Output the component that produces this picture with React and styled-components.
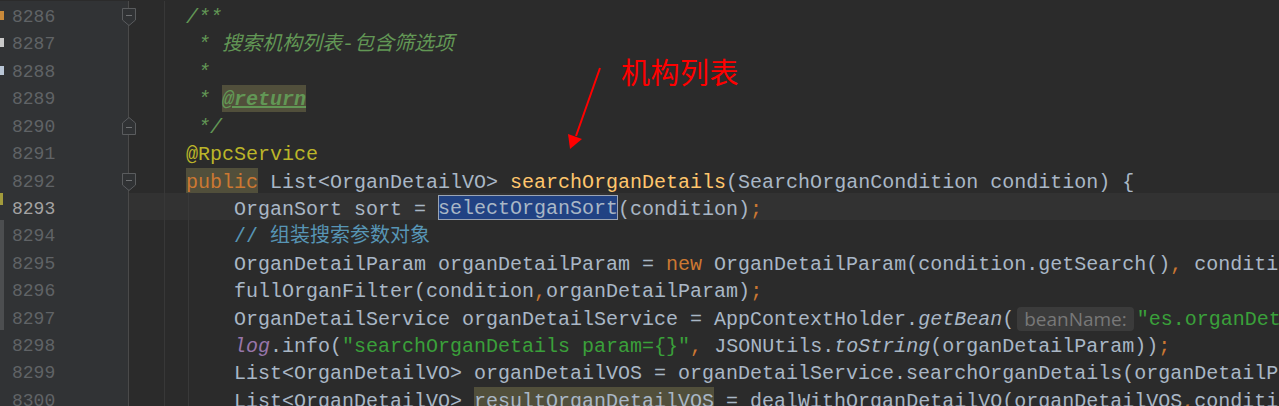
import React from "react";
import styled, { createGlobalStyle, css } from "styled-components";

const Global = createGlobalStyle`
  html, body {
    margin: 0;
    background: #2b2b2b;
    overflow: hidden;
  }
`;

const LINE = 27.43;

const Editor = styled.div`
  position: relative;
  width: 1279px;
  height: 406px;
  overflow: hidden;
  padding-top: 1px;
  box-sizing: border-box;
  background: #2b2b2b;
  font-family: "Liberation Mono", "Noto Sans CJK SC", monospace;
`;

const Row = styled.div`
  display: grid;
  grid-template-columns: 128px 37px 1fr;
  height: ${LINE}px;
  position: relative;
  background: ${({ current }) => (current ? "#323232" : "transparent")};
`;

const Gutter = styled.div`
  position: relative;
  background: #313335;
  color: ${({ current }) => (current ? "#a4a3a3" : "#606366")};
  font-size: 18px;
  line-height: ${LINE}px;
  padding: 3px 0 0 12px;
  box-sizing: border-box;
`;

const FoldCol = styled.div`
  border-left: 1px solid #4a4a4a;
  border-right: 1px solid #383838;
`;

const Code = styled.div`
  position: relative;
  padding: 3px 0 0 21px;
  box-sizing: border-box;
  font-size: 20px;
  line-height: ${LINE}px;
  white-space: pre;
  overflow: hidden;
  color: #a9b7c6;
  ${({ guide }) =>
    guide &&
    css`
      &::before {
        content: "";
        position: absolute;
        left: 23px;
        top: 0;
        bottom: 0;
        border-left: 1px solid #393939;
      }
    `}
`;

const EdgeMark = styled.span`
  position: absolute;
  left: 0;
  top: ${({ top }) => top}px;
  width: ${({ w }) => w}px;
  height: ${({ h }) => h}px;
  background: ${({ color }) => color};
`;

const FoldIcon = styled.svg`
  position: absolute;
  left: 121px;
  top: ${({ dir }) => (dir === "up" ? 6 : 7)}px;
  width: 16px;
  height: 18px;
`;

const colors = {
  t: "#a9b7c6",
  k: "#cc7832",
  a: "#bbb529",
  m: "#ffc66d",
  c: "#629755",
  lc: "#5795b5",
  s: "#3aa03a",
  p: "#cc7832",
  st: "#9876aa",
  it: "#a9b7c6",
};

const Tok = styled.span`
  color: ${({ kind }) => colors[kind] || "#a9b7c6"};
  font-style: ${({ kind }) => (["c", "st", "it"].includes(kind) ? "italic" : "normal")};
`;

const DocTag = styled.span`
  color: #629755;
  font-style: italic;
  font-weight: bold;
  text-decoration: underline;
  background: #514f3b;
  display: inline-block;
  height: 27px;
  line-height: 27px;
  vertical-align: top;
  margin-top: -1px;
  padding-top: 1px;
  box-sizing: border-box;
`;

const Marked = styled.span`
  color: ${({ kind }) => (kind === "kh" ? "#cc7832" : "#a9b7c6")};
  background: #514f3b;
  display: inline-block;
  height: 26px;
  line-height: 26px;
  padding-top: 2px;
  vertical-align: top;
  margin-top: -1px;
`;

const Selection = styled.span`
  background: #214283;
  outline: 1px solid #9aa4b4;
  outline-offset: -1px;
  display: inline-block;
  height: 25px;
  line-height: 25px;
  padding-top: 1px;
  box-sizing: border-box;
  vertical-align: top;
  margin-top: -1px;
`;

const Hint = styled.span`
  display: inline-block;
  vertical-align: top;
  margin: 1px 3px 0 3px;
  height: 24px;
  line-height: 24px;
  padding: 0 7px;
  border-radius: 4px;
  background: #3b3b3b;
  color: #787878;
  font-family: "Open Sans", "Liberation Sans", sans-serif;
  font-size: 19px;
`;

const Callout = styled.div`
  position: absolute;
  left: 560px;
  top: 50px;
  width: 200px;
  height: 110px;
`;

const CalloutText = styled.span`
  position: absolute;
  left: 61px;
  top: 1px;
  color: #ff0000;
  font-family: "Noto Sans CJK SC", sans-serif;
  font-size: 29px;
  line-height: 40px;
  letter-spacing: 0.5px;
`;

const lines = [
  { n: 8286, fold: "down", edge: "#c8893a", toks: [["c", "/**"]] },
  { n: 8287, edge: "#c9c9c9", toks: [["c", " * 搜索机构列表-包含筛选项"]] },
  { n: 8288, edge: "#b9c6d6", toks: [["c", " *"]] },
  { n: 8289, toks: [["c", " * "], ["tag", "@return"]] },
  { n: 8290, fold: "up", toks: [["c", " */"]] },
  { n: 8291, toks: [["a", "@RpcService"]] },
  {
    n: 8292,
    fold: "down",
    toks: [
      ["kh", "public"],
      ["t", " List<OrganDetailVO> "],
      ["m", "searchOrganDetails"],
      ["t", "(SearchOrganCondition condition) {"],
    ],
  },
  {
    n: 8293,
    current: true,
    toks: [
      ["t", "    OrganSort sort = "],
      ["sel", "selectOrganSort"],
      ["t", "(condition)"],
      ["p", ";"],
    ],
  },
  { n: 8294, toks: [["t", "    "], ["lc", "// 组装搜索参数对象"]] },
  {
    n: 8295,
    toks: [
      ["t", "    OrganDetailParam organDetailParam = "],
      ["k", "new"],
      ["t", " OrganDetailParam(condition.getSearch()"],
      ["p", ","],
      ["t", " condition.getSort())"],
      ["p", ";"],
    ],
  },
  {
    n: 8296,
    toks: [
      ["t", "    fullOrganFilter(condition"],
      ["p", ","],
      ["t", "organDetailParam)"],
      ["p", ";"],
    ],
  },
  {
    n: 8297,
    toks: [
      ["t", "    OrganDetailService organDetailService = AppContextHolder."],
      ["it", "getBean"],
      ["t", "("],
      ["hint", "beanName:"],
      ["s", "\"es.organDetailService\""],
      ["t", ")"],
      ["p", ";"],
    ],
  },
  {
    n: 8298,
    toks: [
      ["t", "    "],
      ["st", "log"],
      ["t", ".info("],
      ["s", "\"searchOrganDetails param={}\""],
      ["p", ","],
      ["t", " JSONUtils."],
      ["it", "toString"],
      ["t", "(organDetailParam))"],
      ["p", ";"],
    ],
  },
  {
    n: 8299,
    toks: [
      ["t", "    List<OrganDetailVO> organDetailVOS = organDetailService.searchOrganDetails(organDetailParam)"],
      ["p", ";"],
    ],
  },
  {
    n: 8300,
    toks: [
      ["t", "    List<OrganDetailVO> "],
      ["hl", "resultOrganDetailVOS"],
      ["t", " = dealWithOrganDetailVO(organDetailVOS"],
      ["p", ","],
      ["t", "condition)"],
      ["p", ";"],
    ],
  },
];

const Fold = ({ dir }) => (
  <FoldIcon dir={dir} viewBox="0 0 16 18">
    {dir === "down" ? (
      <path d="M1.5 0.5 H14.5 V12 L8 17.5 L1.5 12 Z" fill="#303234" stroke="#5a5c5e" />
    ) : (
      <path d="M1.5 17.5 H14.5 V6 L8 0.5 L1.5 6 Z" fill="#303234" stroke="#5a5c5e" />
    )}
    <path d={dir === "down" ? "M5 7.5 H11" : "M5 10.5 H11"} stroke="#6e7072" />
  </FoldIcon>
);

const renderTok = ([kind, text], i) => {
  if (kind === "tag") return <DocTag key={i}>{text}</DocTag>;
  if (kind === "kh" || kind === "hl")
    return (
      <Marked key={i} kind={kind}>
        {text}
      </Marked>
    );
  if (kind === "sel") return <Selection key={i}>{text}</Selection>;
  if (kind === "hint") return <Hint key={i}>{text}</Hint>;
  return (
    <Tok key={i} kind={kind}>
      {text}
    </Tok>
  );
};

export default function App() {
  return (
    <>
      <Global />
      <Editor>
        {lines.map((l) => (
          <Row key={l.n} current={l.current}>
            <Gutter current={l.current}>
              {l.edge && <EdgeMark top={10} w={4} h={9} color={l.edge} />}
              {l.current && <EdgeMark top={0} w={3} h={12} color="#a29b3c" />}
              {l.n >= 8294 && l.n <= 8297 && <EdgeMark top={0} w={4} h={LINE} color="#4c4e50" />}
              {l.n}
              {l.fold && <Fold dir={l.fold} />}
            </Gutter>
            <FoldCol />
            <Code guide={l.n >= 8293}>{l.toks.map(renderTok)}</Code>
          </Row>
        ))}
        <Callout>
          <svg width="200" height="110" viewBox="0 0 200 110">
            <line x1="40" y1="18" x2="16" y2="86" stroke="#ff0000" strokeWidth="2" />
            <polygon points="10,99 8,84 22,89" fill="#ff0000" />
          </svg>
          <CalloutText>机构列表</CalloutText>
        </Callout>
      </Editor>
    </>
  );
}
